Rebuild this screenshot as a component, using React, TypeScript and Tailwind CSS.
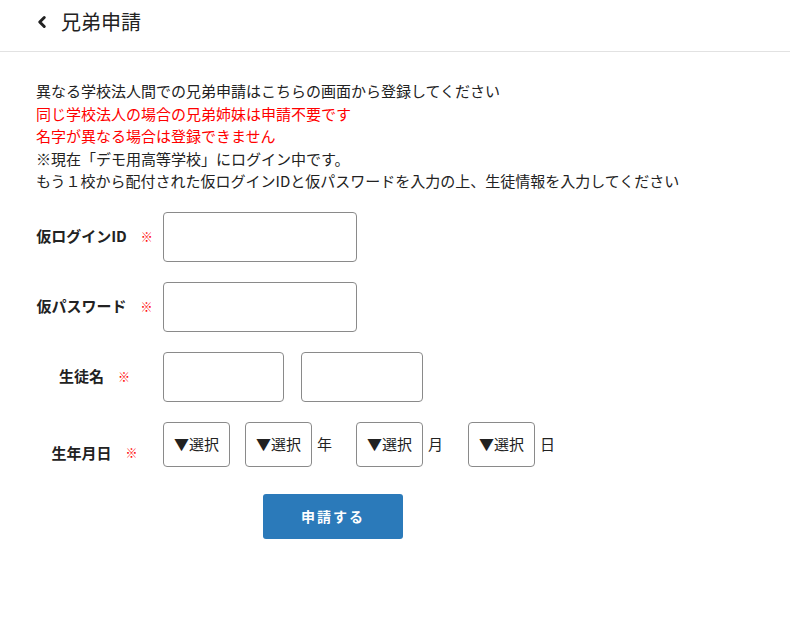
import { ChevronLeft } from "lucide-react"

function Req({ className = "" }: { className?: string }) {
    return <span className={"text-[12px] font-bold text-[#ff0000] " + className}>※</span>
}

function Select() {
    return (
        <div className="flex h-[45px] w-[67px] shrink-0 items-center justify-center rounded-[4px] border border-[#8a8a8a] text-[15px] text-[#222]">
            ▼選択
        </div>
    )
}

export default function App() {
    return (
        <div className="min-h-[619px] w-[790px] bg-white text-[#222]" style={{ fontFamily: '"Noto Sans CJK JP", "Noto Sans", sans-serif' }}>
            <div className="flex h-[52px] items-center border-b border-[#e2e2e2] pb-[7px] pl-[33px]">
                <ChevronLeft className="h-[18px] w-[18px] text-[#222]" strokeWidth={4} />
                <h1 className="ml-[10px] text-[20px] leading-none">兄弟申請</h1>
            </div>

            <div className="px-[36px] pt-[28px] text-[15px] leading-[22.5px]">
                <p>異なる学校法人間での兄弟申請はこちらの画面から登録してください</p>
                <p className="text-[#ff0000]">同じ学校法人の場合の兄弟姉妹は申請不要です</p>
                <p className="text-[#ff0000]">名字が異なる場合は登録できません</p>
                <p>※現在「デモ用高等学校」にログイン中です。</p>
                <p>もう１校から配付された仮ログインIDと仮パスワードを入力の上、生徒情報を入力してください</p>
            </div>

            <div className="mt-[19px] flex flex-col gap-[20px] pl-[36px]">
                <div className="flex items-center">
                    <div className="flex w-[117px] items-center justify-center gap-[14px]">
                        <span className="text-[15px] font-bold">仮ログインID</span>
                        <Req />
                    </div>
                    <div className="ml-[10px] h-[50px] w-[194px] rounded-[4px] border border-[#8a8a8a]" />
                </div>
                <div className="flex items-center">
                    <div className="flex w-[117px] items-center justify-center gap-[14px]">
                        <span className="text-[15px] font-bold">仮パスワード</span>
                        <Req />
                    </div>
                    <div className="ml-[10px] h-[50px] w-[194px] rounded-[4px] border border-[#8a8a8a]" />
                </div>
                <div className="flex items-center">
                    <div className="flex w-[117px] items-center justify-center gap-[14px]">
                        <span className="text-[15px] font-bold">生徒名</span>
                        <Req />
                    </div>
                    <div className="ml-[10px] h-[50px] w-[121px] rounded-[4px] border border-[#8a8a8a]" />
                    <div className="ml-[17px] h-[50px] w-[122px] rounded-[4px] border border-[#8a8a8a]" />
                </div>
                <div className="flex items-start">
                    <div className="mt-[20px] flex w-[117px] items-center justify-center gap-[14px]">
                        <span className="text-[15px] font-bold">生年月日</span>
                        <Req />
                    </div>
                    <div className="ml-[10px] flex items-center text-[15px]">
                        <Select />
                        <div className="ml-[15px]"><Select /></div>
                        <span className="ml-[5px]">年</span>
                        <div className="ml-[24px]"><Select /></div>
                        <span className="ml-[5px]">月</span>
                        <div className="ml-[25px]"><Select /></div>
                        <span className="ml-[5px]">日</span>
                    </div>
                </div>
            </div>

            <div className="mt-[27px] pl-[263px]">
                <button className="h-[45px] w-[140px] rounded-[3px] bg-[#2b7aba] text-[14px] font-bold tracking-[2px] text-white">
                    申請する
                </button>
            </div>
        </div>
    )
}
